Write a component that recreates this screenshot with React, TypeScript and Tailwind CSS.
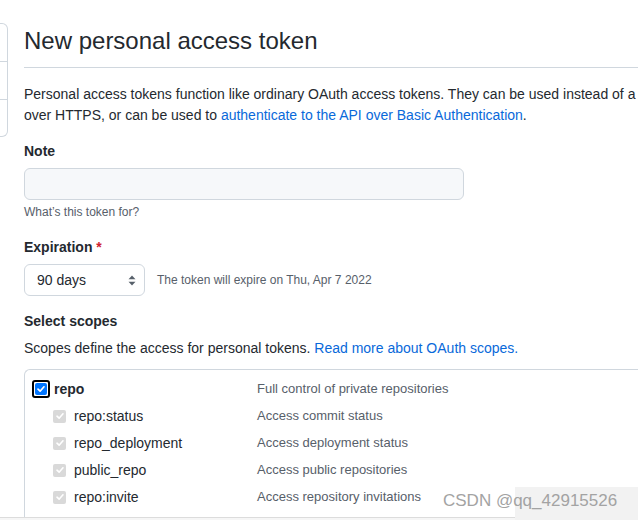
import React from "react";

const font = { fontFamily: '"Liberation Sans", Arial, sans-serif' };

function BigCheck() {
  return (
    <span className="flex h-[18px] w-[18px] shrink-0 items-center justify-center rounded-[3px] border-2 border-black bg-white">
      <span className="flex h-[12px] w-[12px] items-center justify-center rounded-[2px] bg-[#0075ff]">
        <svg width="10" height="10" viewBox="0 0 10 10" fill="none">
          <path d="M2 5.2 L4.1 7.2 L8 2.8" stroke="white" strokeWidth="1.7" strokeLinecap="round" strokeLinejoin="round" />
        </svg>
      </span>
    </span>
  );
}

function SmallCheck() {
  return (
    <span className="flex h-[13px] w-[13px] shrink-0 items-center justify-center rounded-[2px] bg-[#d9d9d9]">
      <svg width="10" height="10" viewBox="0 0 10 10" fill="none">
        <path d="M2 5.2 L4.1 7.2 L8 2.8" stroke="white" strokeWidth="1.6" strokeLinecap="round" strokeLinejoin="round" />
      </svg>
    </span>
  );
}

const subs = [
  ["repo:status", "Access commit status"],
  ["repo_deployment", "Access deployment status"],
  ["public_repo", "Access public repositories"],
  ["repo:invite", "Access repository invitations"],
  ["security_events", "Read and write security events"],
];

export default function App() {
  return (
    <div style={font} className="relative h-[520px] w-[638px] overflow-hidden bg-white text-[#24292f]">
      <div className="flex pt-[23px]">
        {/* sidebar fragment */}
        <div className="flex h-[114px] w-[8px] shrink-0 flex-col rounded-r-[6px] border border-l-0 border-[#d0d7de] bg-white">
          <div className="h-[38px] border-b border-[#d0d7de]" />
          <div className="h-[38px] border-b border-[#d0d7de]" />
          <div className="flex-1" />
        </div>

        <div className="ml-[16px] w-[900px] shrink-0">
          <div className="border-b border-[#d0d7de] pb-2">
            <h2 className="text-[24px] font-normal leading-[36px]">New personal access token</h2>
          </div>

          <p className="mt-4 whitespace-nowrap text-[14px] leading-[21px]">
            Personal access tokens function like ordinary OAuth access tokens. They can be used instead of a password for Git
            <br />
            over HTTPS, or can be used to{" "}
            <span className="text-[#0969da]">authenticate to the API over Basic Authentication</span>.
          </p>

          <div className="mt-[15px] text-[14px] font-bold leading-[21px]">Note</div>
          <div className="mt-[6px] h-[32px] w-[440px] rounded-[6px] border border-[#d0d7de] bg-[#f6f8fa]" />
          <div className="mt-[3px] text-[12px] leading-[18px] text-[#57606a]">What’s this token for?</div>

          <div className="mt-[16px] text-[14px] font-bold leading-[21px]">
            Expiration <span className="text-[#cf222e]">*</span>
          </div>
          <div className="mt-[6px] flex items-center">
            <div className="flex h-[32px] w-[121px] items-center justify-between rounded-[6px] border border-[#d0d7de] bg-white pl-[12px] pr-[8px] text-[14px]">
              <span>90 days</span>
              <svg width="8" height="11" viewBox="0 0 8 11">
                <path d="M4 0.5 L7.5 4.3 H0.5 Z" fill="#57606a" />
                <path d="M4 10.5 L7.5 6.7 H0.5 Z" fill="#57606a" />
              </svg>
            </div>
            <span className="ml-[12px] text-[12px] text-[#57606a]">The token will expire on Thu, Apr 7 2022</span>
          </div>

          <div className="mt-[15px] text-[14px] font-bold leading-[21px]">Select scopes</div>
          <p className="mt-[6px] text-[14px] leading-[21px]">
            Scopes define the access for personal tokens.{" "}
            <span className="text-[#0969da]">Read more about OAuth scopes.</span>
          </p>

          <div className="mt-[10px] rounded-tl-[6px] border-l border-t border-[#d0d7de] pt-[9px]">
            <div className="flex h-[20px] items-center">
              <div className="flex w-[232px] items-center pl-[7px]">
                <BigCheck />
                <span className="ml-[4px] text-[14px] font-bold">repo</span>
              </div>
              <span className="text-[13px] text-[#57606a]">Full control of private repositories</span>
            </div>
            {subs.map(([name, desc]) => (
              <div key={name} className="mt-[7px] flex h-[20px] items-center">
                <div className="flex w-[232px] items-center pl-[28px]">
                  <SmallCheck />
                  <span className="ml-[8px] text-[14px]">{name}</span>
                </div>
                <span className="text-[13px] text-[#57606a]">{desc}</span>
              </div>
            ))}
          </div>
        </div>
      </div>

      {/* bottom artifact bar */}
      <div className="absolute bottom-0 left-0 h-[3px] w-full border-t border-[#dcdcdc] bg-[#f6f6f6]" />
      {/* watermark */}
      <div className="absolute left-[515px] top-[487px] h-[33px] w-[123px] bg-[#f2f2f2]" />
      <div className="absolute left-[443px] top-[490px] text-[17px] leading-[22px] text-[#a3a3a3]">CSDN @qq_42915526</div>
    </div>
  );
}
